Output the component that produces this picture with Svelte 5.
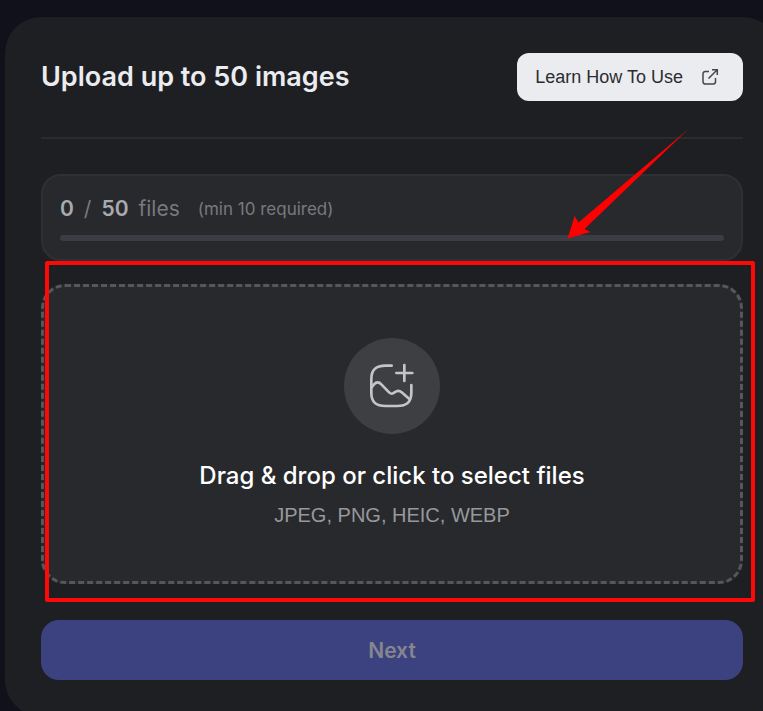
<script>
	const MAX_FILES = 50;
	const MIN_FILES = 10;
	const formats = ['JPEG', 'PNG', 'HEIC', 'WEBP'];

	let count = $state(0);

	const progress = $derived(Math.min(100, (count / MAX_FILES) * 100));

	function pick(event) {
		count = Math.min(MAX_FILES, event.currentTarget.files.length);
	}
</script>

<div class="page">
	<main class="card">
		<header class="head">
			<h1>Upload up to {MAX_FILES} images</h1>
			<a class="learn" href="#how-to-use">
				Learn How To Use
				<svg class="external" viewBox="0 0 18 18" aria-hidden="true">
					<path d="M8 3.500H4.200A2.200 2.200 0 0 0 2 5.700V13.800A2.200 2.200 0 0 0 4.200 16H12.300A2.200 2.200 0 0 0 14.500 13.800V10M11 1.700H16.300V7M16 2L7.500 10.500" />
				</svg>
			</a>
		</header>

		<section class="stats">
			<p class="count">
				<strong>{count}</strong>
				<span>/</span>
				<strong>{MAX_FILES}</strong>
				<span>files</span>
				<small>(min {MIN_FILES} required)</small>
			</p>
			<div class="track" role="progressbar" aria-label="Files added" aria-valuenow={count} aria-valuemax={MAX_FILES}>
				<div class="fill" style="width: {progress}%"></div>
			</div>
			<svg class="arrow" viewBox="0 0 122 110" aria-hidden="true">
				<path d="M0.500 109.500L7.700 87L11.500 93.500L121.500 0L17.500 100L23.500 103Z" />
			</svg>
		</section>

		<div class="drop-area">
			<label class="drop">
				<input type="file" multiple accept="image/*" onchange={pick} />
				<span class="badge">
					<svg viewBox="118 98 144 144" aria-hidden="true">
						<path d="M189 109H171C142 109 128 120 128 149V191C128 219 142 230 171 230H205C234 230 248 219 248 191V167" />
						<path d="M227 107V155M203 131H251" />
						<path d="M128 175L136 165C143 157 151 157 158 165L179 187C186 195 191 195 198 189C206 183 212 183 219 189L243 210" />
					</svg>
				</span>
				<span class="title">Drag &amp; drop or click to select files</span>
				<span class="formats">{formats.join(', ')}</span>
			</label>
			<div class="highlight"></div>
		</div>

		<button class="next" type="button" disabled={count < MIN_FILES}>Next</button>
	</main>
</div>

<style>
	:global(body) {
		margin: 0;
		background: #10111a;
	}

	.page {
		box-sizing: border-box;
		height: 100vh;
		overflow: hidden;
		padding: 17px 0 0 5px;
		font-family: Inter, 'Liberation Sans', sans-serif;
	}

	.card {
		margin-right: -16px;
		padding: 36px;
		border-radius: 36px;
		background: #1e1f23;
	}

	.head {
		display: flex;
		align-items: center;
		justify-content: space-between;
		padding-bottom: 36px;
		border-bottom: 2px solid #2a2b2f;
	}

	h1 {
		margin: 0;
		color: #ebecf0;
		font-size: 27px;
		font-weight: 600;
		line-height: 36px;
	}

	.learn {
		display: flex;
		align-items: center;
		gap: 18px;
		box-sizing: border-box;
		height: 48px;
		padding: 0 24px 0 18px;
		border-radius: 12px;
		background: #ebecf0;
		color: #2b2c31;
		font-family: 'Liberation Sans', sans-serif;
		font-size: 18px;
		text-decoration: none;
	}

	.external {
		width: 18px;
		height: 18px;
		fill: none;
		stroke: #45464a;
		stroke-width: 1.5;
	}

	.stats {
		position: relative;
		margin-top: 35px;
		padding: 19px 17px 18px;
		border: 2px solid #2f3034;
		border-radius: 20px;
		background: #28292d;
	}

	.count {
		display: flex;
		align-items: center;
		gap: 10px;
		margin: 0 0 12px;
		color: #78797d;
		font-size: 21px;
		line-height: 28px;
	}

	.count strong {
		color: #a9aaad;
		font-weight: 600;
	}

	.count small {
		margin-left: 8px;
		font-size: 17px;
	}

	.track {
		height: 6px;
		border-radius: 3px;
		background: #3c3c44;
	}

	.fill {
		height: 100%;
		border-radius: 3px;
		background: #5a66d8;
	}

	.arrow {
		position: absolute;
		right: 52px;
		bottom: 20px;
		width: 122px;
		height: 110px;
		fill: #ff0000;
	}

	.drop-area {
		position: relative;
		margin: 23px 0 36px;
	}

	.drop {
		display: flex;
		flex-direction: column;
		align-items: center;
		padding: 51px 20px;
		border: 3px dashed #56575b;
		border-radius: 24px;
		background: #28292d;
		cursor: pointer;
	}

	.drop input {
		position: absolute;
		width: 1px;
		height: 1px;
		opacity: 0;
	}

	.badge {
		display: grid;
		place-items: center;
		width: 96px;
		height: 96px;
		border-radius: 50%;
		background: #3e3f43;
	}

	.badge svg {
		width: 48px;
		height: 48px;
		fill: none;
		stroke: #c4c5c8;
		stroke-width: 8;
		stroke-linecap: round;
		stroke-linejoin: round;
	}

	.title {
		margin-top: 24px;
		color: #ffffff;
		font-size: 24px;
		font-weight: 500;
		line-height: 36px;
	}

	.formats {
		margin-top: 6px;
		color: #97989b;
		font-family: 'Liberation Sans', sans-serif;
		font-size: 20px;
		line-height: 30px;
	}

	.highlight {
		position: absolute;
		inset: -23px -12px -18px 4px;
		border: 4px solid #ff0808;
		border-radius: 2px;
		pointer-events: none;
	}

	.next {
		display: block;
		width: 100%;
		height: 60px;
		border: 0;
		border-radius: 18px;
		background: #3b427f;
		color: #85868e;
		font-family: inherit;
		font-size: 21px;
		font-weight: 600;
	}
</style>
